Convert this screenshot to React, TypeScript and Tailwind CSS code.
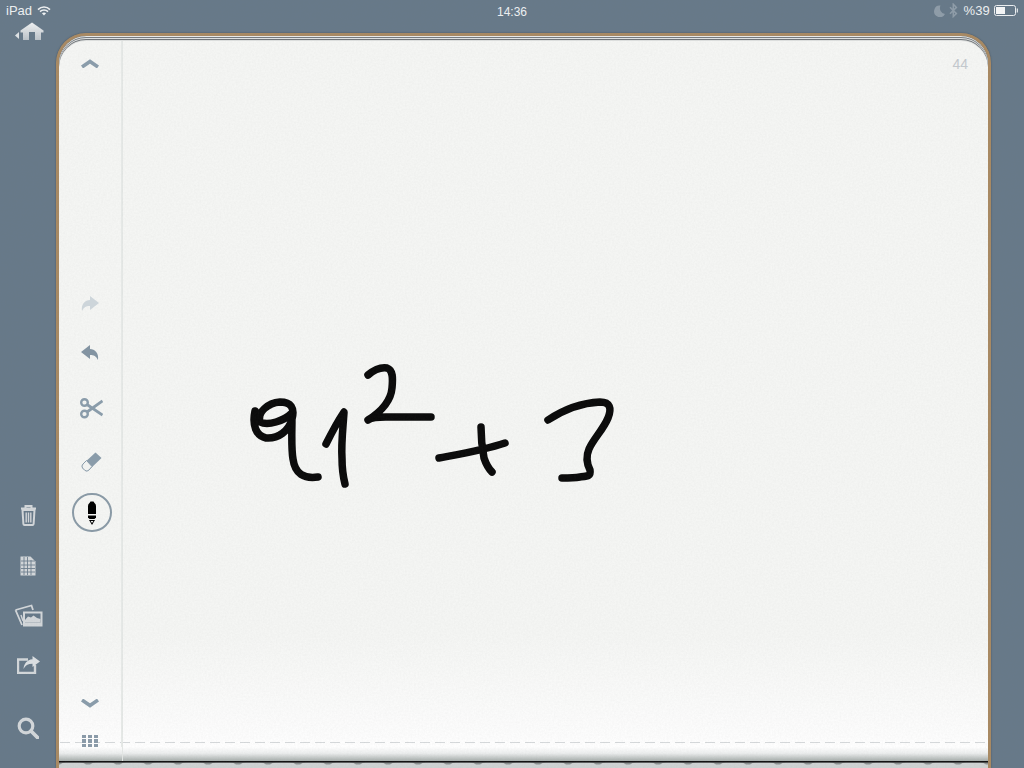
import React from "react";

const Box = ({ w, h, vb, children, className = "" }: { w: number; h: number; vb: string; children: React.ReactNode; className?: string }) => (
  <svg width={w} height={h} viewBox={vb} className={className}>{children}</svg>
);

const strokes = [
  "M255 411 C252 425 256 436 266 438 C278 439 289 431 292 419 C295 408 291 402 280 402 C268 403 257 412 260 422 C268 426 284 421 292 413 M292 416 C292 432 291 448 293 459 C295 474 304 479 318 477",
  "M326 444 C332 432 338 421 344 412 C343 428 341 444 342 458 C342 468 343 476 345 484",
  "M368 375 C374 370 381 367 387 368 C393 370 393 378 392 388 C391 400 382 411 368 420 C372 417 377 417 386 417 C400 417 415 417 431 417",
  "M439 458 C460 454 484 450 505 443 M481 427 C481 437 482 448 484 458 C486 464 489 469 492 472",
  "M548 420 C563 410 580 403 600 402 C610 402 612 408 608 418 C603 430 594 438 589 449 C586 456 587 464 590 470 C591 476 588 476 580 477 C574 478 568 478 562 478",
];

export default function App() {
  return (
    <div className="relative flex h-[768px] w-[1024px] flex-col overflow-hidden bg-[#677989] font-['Liberation_Sans',sans-serif]">
      {/* Status bar */}
      <div className="relative flex h-[20px] shrink-0 items-center pl-[6px] pr-[6px] pt-[1px] text-[13px] text-[#eef1f3]">
        <span>iPad</span>
        <Box w={14} h={10} vb="0 0 14 10" className="ml-[5px]">
          <path d="M1 3.6 C4.4 .2 9.6 .2 13 3.6 M3 5.6 C5.2 3.5 8.8 3.5 11 5.6" fill="none" stroke="#eef1f3" strokeWidth="1.6" />
          <path d="M4.9 7.3 C6.1 6.2 7.9 6.2 9.1 7.3 L7 9.6 Z" fill="#eef1f3" />
        </Box>
        <span className="absolute left-[497px] top-[3px] text-[12px]">14:36</span>
        <div className="ml-auto flex items-center">
          <Box w={11} h={12} vb="0 0 11 12">
            <path d="M6.5 0.5 A5.8 5.8 0 1 0 11 9 A6 6 0 0 1 6.5 0.5 Z" fill="#8f9da9" />
          </Box>
          <Box w={9} h={15} vb="0 0 9 15" className="ml-[4px]">
            <path d="M1 4.2 L7.4 10.6 L4.3 13.6 V1.2 L7.4 4.4 L1 10.8" fill="none" stroke="#8f9da9" strokeWidth="1.5" />
          </Box>
          <span className="ml-[5px] text-[13px] tracking-[0.2px]">%39</span>
          <Box w={24} h={11} vb="0 0 24 11" className="ml-[4px]">
            <rect x="0.5" y="0.5" width="21" height="10" rx="2" fill="none" stroke="#eef1f3" />
            <rect x="2" y="2" width="9" height="7" fill="#f6f7f8" />
            <rect x="22.7" y="3.5" width="1.3" height="4" fill="#dfe3e6" />
          </Box>
        </div>
      </div>

      <div className="flex min-h-0 flex-1">
        {/* Left rail */}
        <div className="flex w-[56px] shrink-0 flex-col items-center">
          <Box w={30} h={20} vb="14 21 30 20" className="mt-[1px] ml-[2px]">
            <defs>
              <linearGradient id="h" x1="0" y1="0" x2="0" y2="1">
                <stop offset="0" stopColor="#f0f2f3" />
                <stop offset="1" stopColor="#bcc3c9" />
              </linearGradient>
            </defs>
            <path d="M15 35.5 L19 32 V39 Z" fill="#dfe3e6" />
            <path d="M32 22.5 L43.5 30.5 V32.5 H41 V40 H35 V32 H29 V40 H23 V32.5 H20.5 V30.5 Z" fill="url(#h)" />
          </Box>
          <div className="mt-[449px] flex h-[50px] items-center justify-center">
            <Box w={17} h={21} vb="0 0 17 21">
              <path d="M1 3.5 H16 M5.5 3 V1 H11.5 V3" fill="none" stroke="#d3d7da" strokeWidth="2" />
              <path d="M2.5 5 H14.5 L13.6 19 Q13.5 20 12.5 20 H4.5 Q3.5 20 3.4 19 Z" fill="none" stroke="#d3d7da" strokeWidth="2" />
              <path d="M6.2 7.5 V17.5 M8.5 7.5 V17.5 M10.8 7.5 V17.5" stroke="#d3d7da" strokeWidth="1.4" />
            </Box>
          </div>
          <div className="flex h-[51px] items-center justify-center">
            <Box w={16} h={20} vb="0 0 16 20">
              <path d="M0.5 0.5 H10.5 L15.5 5.5 V19.5 H0.5 Z" fill="#d3d7da" />
              <path d="M4 1 V19 M7.5 1 V19 M11 4 V19 M1 5 H15 M1 9 H15 M1 12.5 H15 M1 16 H15" stroke="#6d7f8e" strokeWidth="0.9" />
            </Box>
          </div>
          <div className="flex h-[49px] items-center justify-center">
            <Box w={29} h={23} vb="0 0 29 23">
              <path d="M1.5 6 L17.5 1.5 L19 6 M8 21 L1.5 6" fill="none" stroke="#d3d7da" strokeWidth="1.8" />
              <path d="M7 11 L9 17" stroke="#d3d7da" strokeWidth="1.4" />
              <rect x="9" y="7.5" width="19.5" height="15" fill="#d3d7da" />
              <rect x="11" y="9.5" width="15.5" height="9" fill="#667888" />
              <path d="M11 18.5 L11 16 L14 12.5 L17 13.5 L19.5 11.5 L23 14 L26.5 15 V18.5 Z" fill="#d3d7da" />
            </Box>
          </div>
          <div className="flex h-[50px] items-center justify-center">
            <Box w={23} h={18} vb="0 0 23 18">
              <path d="M11 3.5 H1 V17 H18 V9" fill="none" stroke="#d3d7da" strokeWidth="2.4" />
              <path d="M15.5 0 L23 5.5 L15.5 11 V7.8 C11 7.8 8 9.5 6.5 13 C7 7.5 10 3.8 15.5 3.2 Z" fill="#dce0e3" />
            </Box>
          </div>
          <div className="mt-[23px] flex h-[30px] items-center justify-center">
            <Box w={22} h={22} vb="0 0 22 22">
              <circle cx="9" cy="9" r="6.8" fill="none" stroke="#d3d7da" strokeWidth="3.2" />
              <path d="M14 14 L20.5 20.5" stroke="#d3d7da" strokeWidth="3.8" strokeLinecap="round" />
            </Box>
          </div>
        </div>

        {/* Notebook */}
        <div className="mt-[13px] flex w-[935px] shrink-0 flex-col overflow-hidden rounded-t-[30px] border-x-[3px] border-t-[3px] border-[#a98a63] shadow-[0_0_1.5px_#3a444e]">
          <div className="relative flex min-h-0 flex-1 flex-col overflow-hidden rounded-t-[27px] bg-[linear-gradient(to_bottom,#f5f6f4_0px,#f5f6f4_600px,#fdfdfd_700px,#ffffff_711px)]">
            <div className="pointer-events-none absolute inset-0 z-20 rounded-t-[27px] shadow-[inset_0_1px_0_#e6e8e8,inset_0_2px_0_#777c80,inset_0_3px_0_#dfe1e1,inset_0_4px_0_#6f7478,inset_0_5px_0_#dcdedd]" />
            <div className="flex min-h-0 flex-1">
              {/* Tool column */}
              <div className="relative z-10 flex w-[63px] shrink-0 flex-col items-center border-r border-[#e5e8e6] pt-[18px]">
                <div className="flex h-[20px] items-center">
                  <Box w={18} h={9} vb="0 0 18 9">
                    <path d="M1 8 L9 2.5 L17 8" fill="none" stroke="#8a9caa" strokeWidth="3.6" />
                  </Box>
                </div>
                <div className="mt-[205px] flex h-[50px] items-center">
                  <Box w={18} h={15} vb="0 0 18 15">
                    <path d="M18 7 L9 0 V4 C4 4 0 8 1 15 C3 11 5 10 9 10 V14 Z" fill="#cdd5da" />
                  </Box>
                </div>
                <div className="flex h-[50px] items-center">
                  <Box w={18} h={15} vb="0 0 18 15">
                    <path d="M0 7 L9 0 V4 C14 4 18 8 17 15 C15 11 13 10 9 10 V14 Z" fill="#8394a2" />
                  </Box>
                </div>
                <div className="ml-[3px] mt-[8px] flex h-[48px] items-center">
                  <Box w={23} h={21} vb="0 0 23 21">
                    <circle cx="4.5" cy="4.5" r="3.3" fill="none" stroke="#8a9caa" strokeWidth="2.4" />
                    <circle cx="4.5" cy="16" r="3.3" fill="none" stroke="#8a9caa" strokeWidth="2.4" />
                    <path d="M7 6.5 L22.5 17 M7 14 L22.5 3" stroke="#8a9caa" strokeWidth="2.8" />
                  </Box>
                </div>
                <div className="ml-[3px] mt-[6px] flex h-[48px] items-center">
                  <Box w={21} h={20} vb="0 0 21 20">
                    <path d="M14.5 0.5 L20.5 6 L8 18 Q6 20 4 18.5 L1.5 16 Q0 14 2 12 Z" fill="#8a9caa" />
                    <path d="M5.5 8.5 L11 14.5 L8 18 Q6 20 4 18.5 L1.5 16 Q0 14 2 12 Z" fill="#f1f2f0" stroke="#8a9caa" />
                  </Box>
                </div>
                <div className="ml-[3px] mt-[7px] flex h-[40px] w-[40px] items-center justify-center rounded-full border-2 border-[#8a9aa6]">
                  <Box w={10} h={24} vb="0 0 10 24">
                    <path d="M1 13 V5 Q1 3 2.5 2 L3.5 0.5 H6.5 L7.5 2 Q9 3 9 5 V13 Z" fill="#000" />
                    <path d="M1 14.5 H9 V16.5 L7.5 18 H2.5 L1 16.5 Z" fill="#000" />
                    <path d="M2 19 H8 L5 24 Z M3.6 20 H6.4 L5 22 Z" fill="#000" fillRule="evenodd" />
                  </Box>
                </div>
                <div className="mt-[161px] flex h-[20px] items-center">
                  <Box w={18} h={9} vb="0 0 18 9">
                    <path d="M1 1 L9 6.5 L17 1" fill="none" stroke="#8a9caa" strokeWidth="3.6" />
                  </Box>
                </div>
                <div className="mt-[22px] grid h-[12px] w-[16px] grid-cols-3 grid-rows-3 gap-x-[2px] gap-y-[1px] bg-[#fbfbfb]">
                  {Array.from({ length: 9 }).map((_, i) => (
                    <div key={i} className="bg-[#8a9aa8]" />
                  ))}
                </div>
              </div>
              {/* Canvas */}
              <div className="relative min-w-0 flex-1">
                <span className="absolute right-[20px] top-[20px] text-[14px] leading-[16px] text-[#c4c9ce]">44</span>
                <svg className="absolute left-0 top-0 h-full w-full" viewBox="122 36 866 711" preserveAspectRatio="xMinYMin slice">
                  {strokes.map((d, i) => (
                    <path key={i} d={d} fill="none" stroke="#0a0a0a" strokeWidth="7.5" strokeLinecap="round" strokeLinejoin="round" />
                  ))}
                </svg>
              </div>
            </div>
            {/* Tear-off strip */}
            <div className="h-[14px] shrink-0 bg-[linear-gradient(to_bottom,#ffffff,#eceeee_45%,#a5acaa)]" />
            <div className="absolute bottom-[18px] left-[1px] right-0 z-0 h-px bg-[repeating-linear-gradient(to_right,#d6d9db_0px,#d6d9db_10px,transparent_10px,transparent_15px)]" />
            <div className="absolute bottom-0 left-[63px] top-0 z-0 w-px bg-[#e5e8e6]" />
          </div>
          {/* Perforation */}
          <svg className="h-[7px] w-full shrink-0" viewBox="59 760 929 7" preserveAspectRatio="none">
            <defs>
              <pattern id="p" x="73" y="760" width="30" height="7" patternUnits="userSpaceOnUse">
                <path d="M7 1.5 Q11 1.5 13 3.6 H17 Q19 1.5 23 1.5 Z" fill="#8e9493" />
              </pattern>
            </defs>
            <rect x="59" y="760" width="929" height="7" fill="#cfd3d3" />
            <rect x="59" y="760" width="929" height="7" fill="url(#p)" />
            <rect x="59" y="760" width="929" height="1.6" fill="#111" />
          </svg>
        </div>
        <div className="flex-1" />
      </div>

      {/* Fine paper grain */}
      <svg className="pointer-events-none absolute inset-0 h-full w-full opacity-[0.05]">
        <filter id="grain">
          <feTurbulence type="fractalNoise" baseFrequency="0.55" numOctaves="3" seed="4" />
          <feColorMatrix values="0 0 0 0 0.2  0 0 0 0 0.2  0 0 0 0 0.2  0 0 0 1.4 -0.3" />
        </filter>
        <rect width="1024" height="768" filter="url(#grain)" />
      </svg>
    </div>
  );
}
